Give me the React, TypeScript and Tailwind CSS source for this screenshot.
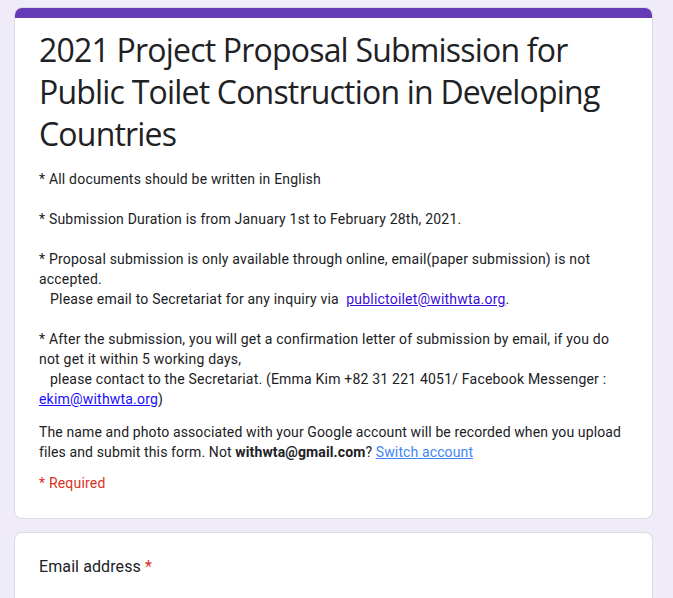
export default function App() {
  return (
    <div className="min-h-screen bg-[#f0ebf8] pl-[14px] pr-[20px] pt-[7px] font-['Roboto',sans-serif] text-[#202124]">
      <div className="overflow-hidden rounded-lg border border-[#dadce0] bg-white">
        <div className="h-[10px] bg-[#673ab7]" />
        <div className="px-6 pt-[11px] pb-[25px]">
          <h1 className="font-['Open_Sans',sans-serif] text-[32px] leading-[42px] tracking-[-0.8px]">
            2021 Project Proposal Submission for Public Toilet Construction in Developing Countries
          </h1>
          <div className="mt-[14px] whitespace-pre-wrap text-sm leading-5 tracking-[0.2px]">
            {'* All documents should be written in English\n\n* Submission Duration is from January 1st to February 28th, 2021.\n\n* Proposal submission is only available through online, email(paper submission) is not accepted.\n   Please email to Secretariat for any inquiry via  '}
            <a href="#" className="text-[#3c0dd9] underline">
              publictoilet@withwta.org
            </a>
            {'.\n\n* After the submission, you will get a confirmation letter of submission by email, if you do not get it within 5 working days,\n   please contact to the Secretariat. (Emma Kim +82 31 221 4051/ Facebook Messenger : '}
            <a href="#" className="text-[#1a0dff] underline">
              ekim@withwta.org
            </a>
            {')'}
          </div>
          <p className="mt-[13px] text-sm leading-5 tracking-[0.12px]">
            The name and photo associated with your Google account will be recorded when you upload files and submit this form. Not{' '}
            <span className="font-bold">withwta@gmail.com</span>?{' '}
            <a href="#" className="text-[#4285f4] underline">
              Switch account
            </a>
          </p>
          <p className="mt-[11px] text-sm leading-5 tracking-[0.2px] text-[#d93025]">* Required</p>
        </div>
      </div>
      <div className="mt-[13px] h-[120px] rounded-lg border border-[#dadce0] bg-white px-6 pt-[22px]">
        <div className="text-base leading-6 tracking-[0.1px]">
          Email address <span className="text-[#d93025]">*</span>
        </div>
      </div>
    </div>
  );
}
